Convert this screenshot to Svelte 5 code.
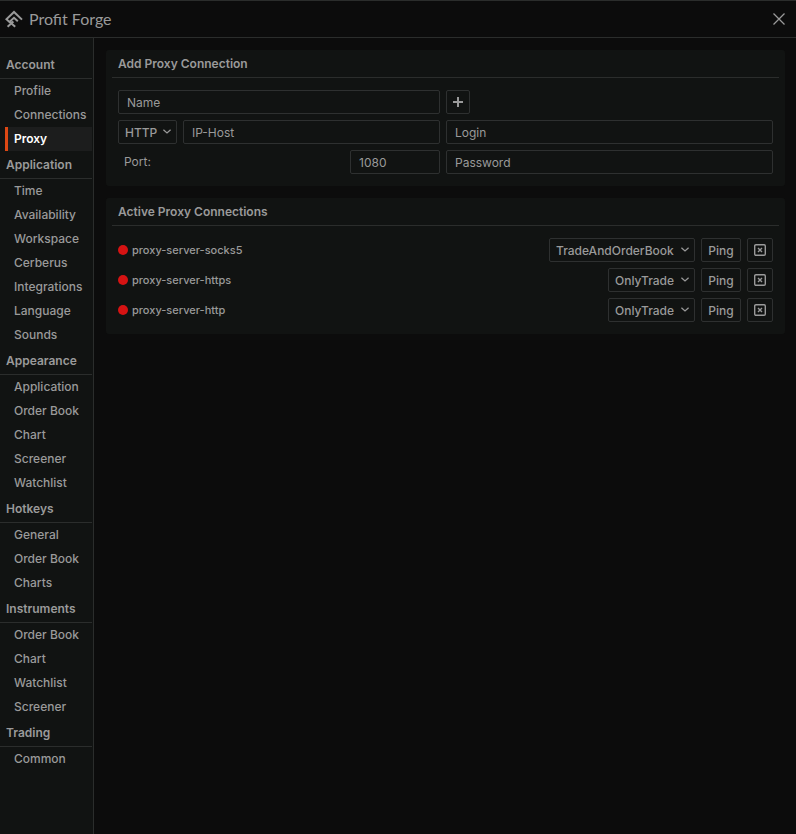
<script lang="ts">
	interface Section {
		title: string;
		items: string[];
	}

	interface Proxy {
		name: string;
		usage: string;
	}

	const sections: Section[] = [
		{ title: 'Account', items: ['Profile', 'Connections', 'Proxy'] },
		{
			title: 'Application',
			items: ['Time', 'Availability', 'Workspace', 'Cerberus', 'Integrations', 'Language', 'Sounds']
		},
		{ title: 'Appearance', items: ['Application', 'Order Book', 'Chart', 'Screener', 'Watchlist'] },
		{ title: 'Hotkeys', items: ['General', 'Order Book', 'Charts'] },
		{ title: 'Instruments', items: ['Order Book', 'Chart', 'Watchlist', 'Screener'] },
		{ title: 'Trading', items: ['Common'] }
	];

	const usages = ['TradeAndOrderBook', 'OnlyTrade', 'OnlyOrderBook'];

	let active = $state('Account/Proxy');
	let name = $state('');
	let protocol = $state('HTTP');
	let host = $state('');
	let port = $state('1080');
	let login = $state('');
	let password = $state('');

	let proxies = $state<Proxy[]>([
		{ name: 'proxy-server-socks5', usage: 'TradeAndOrderBook' },
		{ name: 'proxy-server-https', usage: 'OnlyTrade' },
		{ name: 'proxy-server-http', usage: 'OnlyTrade' }
	]);

	function addProxy() {
		if (!name) return;
		proxies.push({ name, usage: 'OnlyTrade' });
		name = '';
	}

	function removeProxy(index: number) {
		proxies.splice(index, 1);
	}
</script>

{#snippet chevron()}
	<svg class="chevron" width="8" height="6" viewBox="0 0 8 6" aria-hidden="true">
		<path d="M0.4 0.7 L4 3.9 L7.6 0.7" />
	</svg>
{/snippet}

<div class="window">
	<header class="titlebar">
		<svg class="logo" width="18" height="18" viewBox="0 0 18 18" aria-hidden="true">
			<path d="M17 9.6 L9 2 L1.4 9.2 L4.4 12 L9 7.8 L12.8 11.2" />
			<path d="M2.6 16.8 L8.4 11.6 M6.2 13.2 L10.2 16.8 M4 12 L7.6 12.4" />
		</svg>
		<span class="brand">Profit Forge</span>
		<button class="close" aria-label="Close">
			<svg width="12" height="12" viewBox="0 0 12 12" aria-hidden="true">
				<path d="M0.5 0.5 L11.5 11.5 M11.5 0.5 L0.5 11.5" />
			</svg>
		</button>
	</header>

	<div class="body">
		<nav class="sidebar">
			{#each sections as section}
				<h2>{section.title}</h2>
				{#each section.items as item}
					{@const key = `${section.title}/${item}`}
					<button class="nav-item" class:active={active === key} onclick={() => (active = key)}>
						{item}
					</button>
				{/each}
			{/each}
		</nav>

		<main>
			<section class="panel">
				<h3>Add Proxy Connection</h3>
				<div class="form">
					<input type="text" placeholder="Name" aria-label="Name" bind:value={name} />
					<button class="btn add" aria-label="Add" onclick={addProxy}>
						<svg width="10" height="10" viewBox="0 0 10 10" aria-hidden="true">
							<path d="M5 0 V10 M0 5 H10" />
						</svg>
					</button>

					<div class="row">
						<div class="select protocol">
							<select aria-label="Protocol" bind:value={protocol}>
								<option>HTTP</option>
								<option>HTTPS</option>
								<option>SOCKS5</option>
							</select>
							{@render chevron()}
						</div>
						<input type="text" placeholder="IP-Host" aria-label="IP-Host" bind:value={host} />
					</div>
					<input type="text" placeholder="Login" aria-label="Login" bind:value={login} />

					<div class="row">
						<label for="port">Port:</label>
						<input id="port" class="port" type="text" bind:value={port} />
					</div>
					<input type="password" placeholder="Password" aria-label="Password" bind:value={password} />
				</div>
			</section>

			<section class="panel">
				<h3>Active Proxy Connections</h3>
				<ul>
					{#each proxies as proxy, i}
						<li>
							<span class="dot"></span>
							<span class="proxy-name">{proxy.name}</span>
							<div class="select" class:wide={proxy.usage === 'TradeAndOrderBook'}>
								<select aria-label="Usage of {proxy.name}" bind:value={proxy.usage}>
									{#each usages as usage}
										<option>{usage}</option>
									{/each}
								</select>
								{@render chevron()}
							</div>
							<button class="btn ping">Ping</button>
							<button class="btn remove" aria-label="Remove" onclick={() => removeProxy(i)}>
								<svg width="12" height="12" viewBox="0 0 12 12" aria-hidden="true">
									<rect x="0.7" y="0.7" width="10.6" height="10.6" rx="1.2" />
									<path d="M4 4 L8 8 M8 4 L4 8" />
								</svg>
							</button>
						</li>
					{/each}
				</ul>
			</section>
		</main>
	</div>
</div>

<style>
	:global(body) {
		margin: 0;
		background: #0c0c0c;
	}

	.window {
		box-sizing: border-box;
		min-height: 100vh;
		display: flex;
		flex-direction: column;
		border-top: 1px solid #2b2d2c;
		background: #0c0c0c;
		color: #9a9a9a;
		font-family: Inter, 'Liberation Sans', sans-serif;
		font-size: 12px;
		font-weight: 500;
		line-height: 16px;
	}

	button,
	input,
	select {
		box-sizing: border-box;
		margin: 0;
		color: inherit;
		font: inherit;
	}

	svg {
		display: block;
		fill: none;
		stroke: currentColor;
	}

	.titlebar {
		display: flex;
		align-items: center;
		height: 36px;
		padding: 0 10px 0 5px;
		border-bottom: 1px solid #2b2d2c;
	}

	.logo {
		stroke-width: 2;
	}

	.brand {
		flex: 1;
		margin-left: 6px;
		font-family: Lato, sans-serif;
		font-size: 16px;
		font-weight: 400;
	}

	.close {
		padding: 1px;
		border: 0;
		background: none;
		cursor: pointer;
	}

	.close svg {
		stroke-width: 1.3;
	}

	.body {
		flex: 1;
		display: flex;
	}

	.sidebar {
		box-sizing: border-box;
		width: 94px;
		flex-shrink: 0;
		padding: 13px 1px 0 0;
		border-right: 1px solid #2b2d2c;
		background: #111312;
	}

	h2,
	h3 {
		margin: 0;
		border-bottom: 1px solid #2b2d2c;
		font-size: 12px;
		font-weight: 600;
		line-height: 27px;
	}

	h2 {
		padding-left: 6px;
	}

	.nav-item {
		display: block;
		width: calc(100% - 5px);
		height: 24px;
		margin-left: 5px;
		padding: 0 0 0 6px;
		border: 0;
		border-left: 3px solid transparent;
		background: none;
		text-align: left;
		cursor: pointer;
	}

	.nav-item.active {
		border-left-color: #dd4814;
		background: #1c1d1d;
		color: #fff;
		font-weight: 600;
	}

	main {
		flex: 1;
		min-width: 0;
		display: flex;
		flex-direction: column;
		gap: 12px;
		padding: 12px 11px 12px 12px;
	}

	.panel {
		padding: 0 6px 12px;
		border-radius: 3px;
		background: #111312;
	}

	h3 {
		padding-left: 6px;
	}

	.form {
		display: grid;
		grid-template-columns: 322fr 327fr;
		gap: 6px;
		padding: 12px 6px 0;
	}

	.row {
		display: flex;
		align-items: center;
		gap: 6px;
	}

	input,
	select,
	.btn {
		height: 24px;
		border: 1px solid #2e3030;
		border-radius: 2px;
		background: transparent;
		outline: none;
	}

	input {
		width: 100%;
		min-width: 0;
		padding: 0 8px;
		font-weight: 400;
	}

	input::placeholder {
		color: inherit;
		opacity: 1;
	}

	input:focus,
	select:focus {
		border-color: #555;
	}

	label {
		flex: 1;
		padding-left: 6px;
		font-weight: 400;
	}

	.port {
		width: 90px;
	}

	.select {
		display: grid;
		align-items: center;
		width: 87px;
		flex-shrink: 0;
	}

	.select > :global(*) {
		grid-area: 1 / 1;
	}

	.select.wide {
		width: 146px;
	}

	.select.protocol {
		width: 59px;
	}

	select {
		width: 100%;
		padding: 1px 0 0 6px;
		appearance: none;
		cursor: pointer;
	}

	option {
		background: #111312;
	}

	.chevron {
		justify-self: end;
		margin-right: 6px;
		stroke-width: 1.3;
		pointer-events: none;
	}

	.btn {
		display: flex;
		align-items: center;
		justify-content: center;
		padding: 0;
		cursor: pointer;
	}

	.add {
		width: 24px;
	}

	.add svg {
		stroke-width: 2;
	}

	.ping {
		width: 40px;
		padding-top: 1px;
	}

	.remove {
		width: 26px;
	}

	.remove svg {
		stroke-width: 1.4;
	}

	.btn:hover {
		border-color: #555;
	}

	ul {
		display: flex;
		flex-direction: column;
		gap: 6px;
		margin: 0;
		padding: 12px 6px 0;
		list-style: none;
	}

	li {
		display: flex;
		align-items: center;
		gap: 4px;
	}

	.dot {
		width: 10px;
		height: 10px;
		border-radius: 50%;
		background: #d61313;
	}

	.proxy-name {
		flex: 1;
		font-size: 11px;
	}

	li .btn {
		margin-left: 2px;
	}
</style>
